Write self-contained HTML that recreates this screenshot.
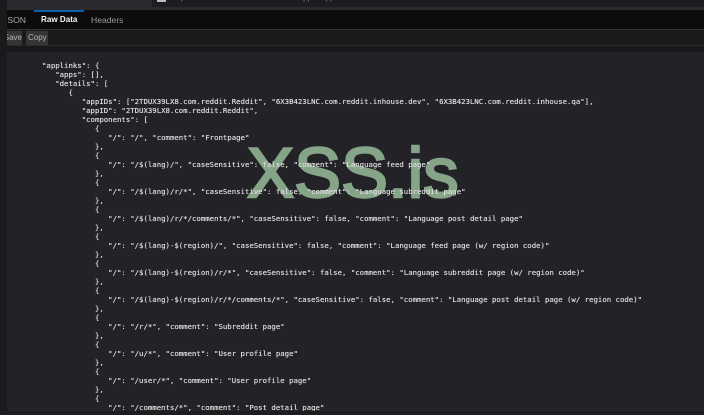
<!DOCTYPE html>
<html><head><meta charset="utf-8">
<style>
html,body{margin:0;padding:0;background:#232327;}
#r{position:relative;width:704px;height:415px;overflow:hidden;background:#232327;filter:blur(0.3px);font-family:"Liberation Sans",sans-serif;}
.b{position:absolute;}
pre{position:absolute;left:42px;top:61px;margin:0;font:7.33px/9px "DejaVu Sans Mono","Liberation Mono",monospace;color:#dcdcde;text-shadow:0 0 .4px #dcdcde;z-index:3;}
#wm{position:absolute;left:247px;top:132.5px;font:70.5px/80px "Liberation Sans",sans-serif;color:#86a487;-webkit-text-stroke:2.4px #86a487;white-space:nowrap;z-index:2;}
.t{position:absolute;font-size:8.6px;line-height:12px;white-space:nowrap;}
</style></head><body>
<div id="r">
<div class="b" style="left:0;top:0;width:704px;height:10px;background:#2a2a2f"></div>
<div class="b" style="left:152px;top:0;width:552px;height:7px;background:#1d1d20"></div>
<div class="b" style="left:157px;top:0;width:9px;height:2px;background:#bdbdc0"></div>
<div class="t" style="left:172px;top:-8px;color:#8a8a8e;font-size:8px">https://www.reddit.com/.well-known/apple-app-site-association</div>
<div class="b" style="left:0;top:10px;width:704px;height:19px;background:#0c0c0d"></div>
<div class="b" style="left:34px;top:10px;width:50px;height:2px;background:#0a62b0"></div>
<div class="b" style="left:0;top:29px;width:704px;height:1px;background:#333336"></div>
<div class="b" style="left:0;top:30px;width:704px;height:15px;background:#1b1b1d"></div>
<div class="b" style="left:0;top:45px;width:704px;height:7px;background:#19191b;border-top:1px solid #2a2a2d;box-sizing:border-box"></div>
<div class="b" style="left:7px;top:31px;width:15px;height:14px;background:#353538"></div>
<div class="b" style="left:26px;top:31px;width:22px;height:14px;background:#353538"></div>
<div class="t" style="left:5px;top:14px;color:#a8a8aa;width:21px;overflow:hidden;direction:rtl">JSON</div>
<div class="t" style="left:41px;top:14px;color:#f0f0f2;font-weight:bold;font-size:8.1px">Raw Data</div>
<div class="t" style="left:91px;top:13.5px;color:#9a9a9d">Headers</div>
<div class="t" style="left:6px;top:32px;color:#b4b4b6;font-size:8px;width:16px;overflow:hidden;direction:rtl">Save</div>
<div class="t" style="left:28px;top:32px;color:#b4b4b6;font-size:8px">Copy</div>
<div class="b" style="left:0;top:0;width:7px;height:415px;background:#1a1a1c"></div>
<div id="wm">XSS.is</div>
<pre>"applinks": {
   "apps": [],
   "details": [
      {
         "appIDs": ["2TDUX39LX8.com.reddit.Reddit", "6X3B423LNC.com.reddit.inhouse.dev", "6X3B423LNC.com.reddit.inhouse.qa"],
         "appID": "2TDUX39LX8.com.reddit.Reddit",
         "components": [
            {
               "/": "/", "comment": "Frontpage"
            },
            {
               "/": "/$(lang)/", "caseSensitive": false, "comment": "Language feed page"
            },
            {
               "/": "/$(lang)/r/*", "caseSensitive": false, "comment": "Language subreddit page"
            },
            {
               "/": "/$(lang)/r/*/comments/*", "caseSensitive": false, "comment": "Language post detail page"
            },
            {
               "/": "/$(lang)-$(region)/", "caseSensitive": false, "comment": "Language feed page (w/ region code)"
            },
            {
               "/": "/$(lang)-$(region)/r/*", "caseSensitive": false, "comment": "Language subreddit page (w/ region code)"
            },
            {
               "/": "/$(lang)-$(region)/r/*/comments/*", "caseSensitive": false, "comment": "Language post detail page (w/ region code)"
            },
            {
               "/": "/r/*", "comment": "Subreddit page"
            },
            {
               "/": "/u/*", "comment": "User profile page"
            },
            {
               "/": "/user/*", "comment": "User profile page"
            },
            {
               "/": "/comments/*", "comment": "Post detail page"</pre>
<div class="b" style="left:0;top:411px;width:704px;height:4px;background:#1d1d20;z-index:4"></div>
</div>
</body></html>
